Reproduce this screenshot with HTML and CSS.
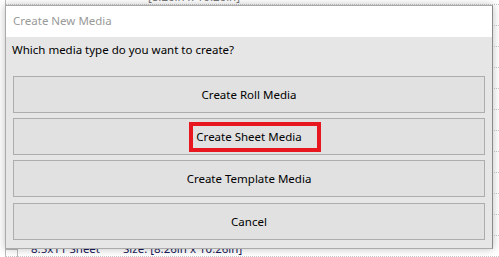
FILE: index.html
```html
<!DOCTYPE html>
<html>
<head>
    <meta charset="utf-8" />
    <title>Create New Media</title>
    <link rel="stylesheet" href="styles.css">
</head>
<body>
    <div class="screen">
      <!-- window behind the dialog -->
      <div class="media_list">
        <div class="row"><span class="name"></span><span class="size">[8.26in x 10.26in]</span></div>
        <div class="row"></div>
        <div class="row"></div>
        <div class="row"></div>
        <div class="row"></div>
        <div class="row"></div>
        <div class="row"></div>
        <div class="row"></div>
        <div class="row"></div>
        <div class="row"></div>
        <div class="row"></div>
        <div class="row"></div>
        <div class="row"><span class="check"></span><span class="name">8.5x11 Sheet</span><span class="size">Size: [8.26in x 10.26in]</span></div>
      </div>

      <!-- dialog -->
      <div class="dialog">
        <div class="title_bar">Create New Media</div>
        <div class="dialog_body">
          <p class="question">Which media type do you want to create?</p>
          <div class="btn_list">
            <button class="btn">Create Roll Media</button>
            <button class="btn marked">Create Sheet Media<span class="highlight"></span></button>
            <button class="btn">Create Template Media</button>
            <button class="btn last">Cancel</button>
          </div>
        </div>
      </div>
    </div>
</body>
</html>
```

FILE: styles.css
```css
* {
  margin: 0;
  padding: 0;
  box-sizing: border-box;
}
body {
  background-color: #fff;
  font-family: "Noto Sans", "Open Sans", sans-serif;
  font-size: 11.5px;
  color: #000;
  overflow: hidden;
}
.screen {
  position: relative;
  width: 499px;
  height: 257px;
  overflow: hidden;
}
/* 背后的列表 */
.media_list {
  margin-top: -16px;
  border-left: 1px solid #bdbdbd;
  margin-left: 5px;
}
.media_list .row {
  display: flex;
  height: 21px;
  line-height: 26px;
  border-bottom: 1px dotted #c8c8c8;
  color: #1a1a5a;
}
.media_list .check {
  width: 12px;
  height: 12px;
  margin-top: 13px;
  border: 1px solid #bbb;
  border-left: none;
}
.media_list .name {
  width: 117px;
  padding-left: 25px;
}
.media_list .check + .name {
  width: 105px;
  padding-left: 13px;
}
.media_list .row:first-child .size {
  padding-left: 25px;
  color: #777;
}
/* 对话框 */
.dialog {
  position: absolute;
  top: 5px;
  left: 5px;
  width: 488px;
  height: 244px;
  border: 1px solid #aaa;
  border-right-color: #8a8a8a;
  background-color: #e6e6e6;
  box-shadow: 0 0 8px rgba(0, 0, 0, 0.25);
  display: flex;
  flex-direction: column;
}
.title_bar {
  height: 31px;
  background-color: #fff;
  color: #999;
  padding-left: 7px;
  line-height: 30px;
}
.dialog_body {
  flex: 1;
  padding: 5px 6px 0 6px;
}
.question {
  line-height: 16px;
}
.btn_list {
  margin-top: 18px;
  display: flex;
  flex-direction: column;
  gap: 5px;
}
.btn {
  position: relative;
  height: 37px;
  margin: 0 1px;
  background-color: #e1e1e1;
  border: 1px solid #adadad;
  font-family: inherit;
  font-size: 11.5px;
  color: #000;
}
.btn.last {
  margin-top: 1px;
}
/* 红色标注框 */
.highlight {
  position: absolute;
  top: 3px;
  left: 175px;
  width: 132px;
  height: 30px;
  border: 4px solid #e8161f;
}
```
